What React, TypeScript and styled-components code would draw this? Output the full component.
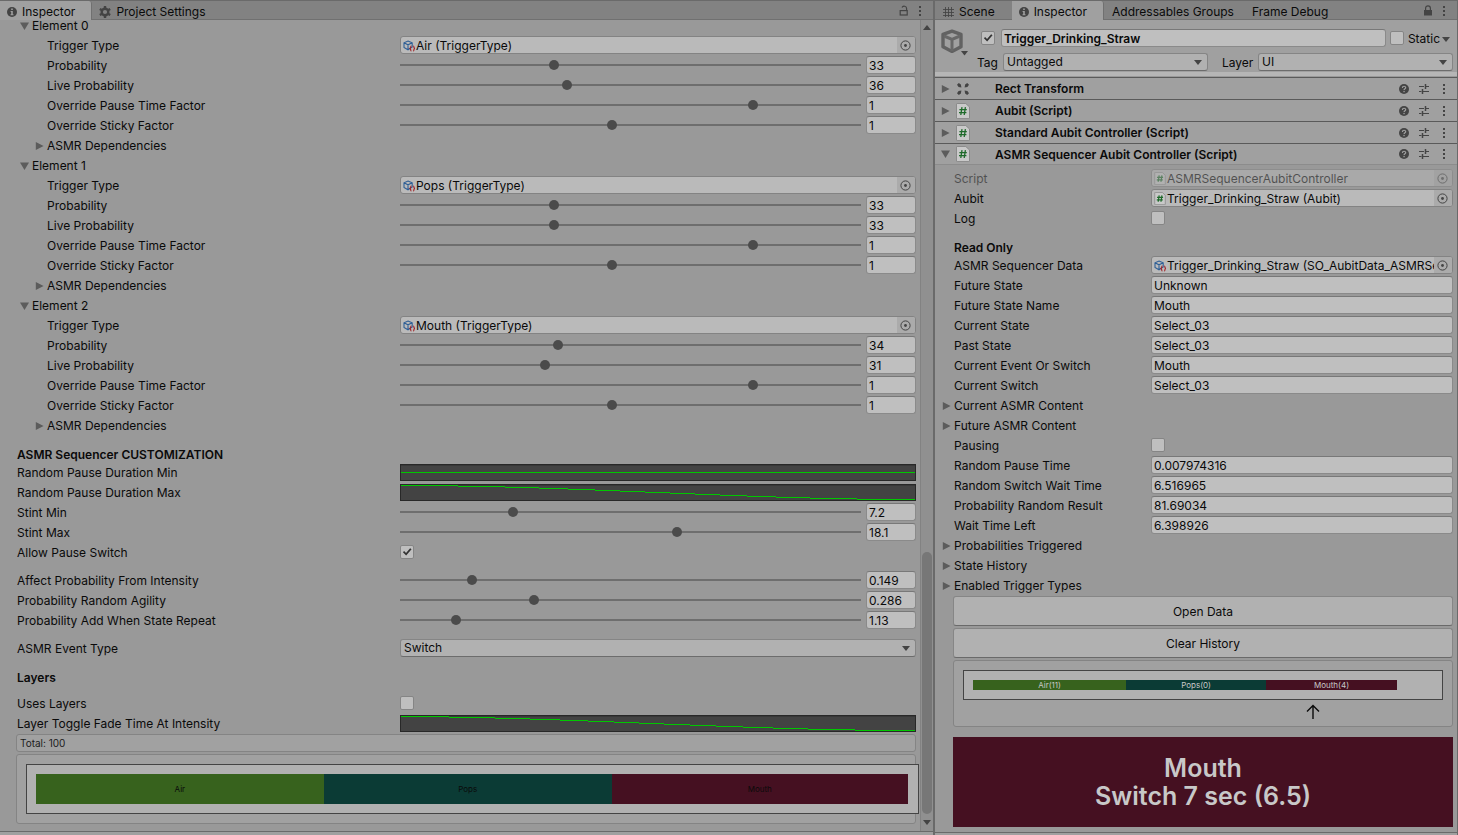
import React, { useId } from "react";
import styled, { createGlobalStyle, css } from "styled-components";

const c = {
  panel: "#999999",
  raised: "#a0a0a0",
  tabs: "#828282",
  line: "#6a6a6a",
  softLine: "#848484",
  field: "#bfbfbf",
  text: "#0a0a0a",
  icon: "#444444",
  arrow: "#5c5c5c",
  air: "#37621d",
  pops: "#0b3b35",
  mouth: "#451021",
};

const GlobalStyle = createGlobalStyle`
  *, *::before, *::after { box-sizing: border-box; }
  body { margin: 0; background: ${c.panel}; }
  body, button, input, select {
    font-family: Inter, "Liberation Sans", sans-serif;
    font-size: 12px;
    line-height: 16px;
    color: ${c.text};
  }
  svg { display: block; flex: none; }
`;

/* ---------- shell ---------- */

const Shell = styled.div`
  display: grid;
  grid-template-columns: minmax(0, 933fr) 2px minmax(0, 523fr);
  min-height: 100vh;
`;

const Divider = styled.div`
  background: ${c.line};
`;

const Panel = styled.section<{ $edge?: boolean }>`
  display: flex;
  flex-direction: column;
  min-width: 0;
  background: ${c.panel};
  border-right: ${(p) => (p.$edge ? `1px solid ${c.line}` : "0")};
`;

const TabBar = styled.nav`
  display: flex;
  height: 20px;
  background: ${c.tabs};
  border-top: 1px solid ${c.line};
  box-shadow: inset 0 -1px 0 #707070;
`;

const Tab = styled.button<{ $active?: boolean; $icon?: boolean }>`
  display: flex;
  align-items: center;
  gap: 5px;
  padding: 3px ${(p) => (p.$icon ? 16 : 9)}px 0 ${(p) => (p.$icon ? 7 : 8)}px;
  border: 0;
  border-right: 1px solid ${(p) => (p.$active ? "#707070" : "transparent")};
  border-radius: 0 3px 0 0;
  background: ${(p) => (p.$active ? c.raised : "transparent")};
  white-space: nowrap;
`;

const TabTools = styled.div`
  display: flex;
  gap: 4px;
  margin-left: auto;
  padding-right: 7px;
`;

const IconButton = styled.button`
  display: grid;
  place-items: center;
  width: 12px;
  padding: 0;
  border: 0;
  background: none;
  color: ${c.icon};
`;

const ScrollArea = styled.div`
  display: flex;
  flex: 1;
`;

const Content = styled.div`
  flex: 1;
  min-width: 0;
  padding: 0 4px 7px 0;
  clip-path: inset(0 -1px 0 0);
`;

const Sheet = styled.div`
  display: flex;
  flex-direction: column;
  gap: 2px;
  margin-top: -4px;
`;

const ScrollBar = styled.div`
  display: flex;
  flex-direction: column;
  width: 13px;
  padding: 5px 1px 6px;
  align-items: center;
  background: #909090;
  border-left: 1px solid #828282;
  color: ${c.icon};
`;

const ScrollGap = styled.div`
  flex: 518;
`;

const ScrollThumb = styled.div`
  flex: 262;
  width: 10px;
  margin: 4px 0 6px;
  border-radius: 5px;
  background: #777777;
`;

const Footer = styled.div<{ $height: number }>`
  height: ${(p) => p.$height}px;
  background: ${c.raised};
  border-top: 1px solid ${c.line};
`;

/* ---------- property rows ---------- */

const columns = {
  left: "minmax(0, 400fr) minmax(0, 516fr)",
  right: "minmax(0, 216fr) minmax(0, 302fr)",
};

const RowBox = styled.div<{ $side: Side; $dim?: boolean }>`
  display: grid;
  grid-template-columns: ${(p) => columns[p.$side]};
  height: 18px;
  opacity: ${(p) => (p.$dim ? 0.5 : 1)};
`;

const labelBase = css`
  padding-top: 2px;
  white-space: nowrap;
`;

const Label = styled.label<{ $indent: number }>`
  ${labelBase}
  padding-left: ${(p) => p.$indent}px;
`;

const Heading = styled.h2<{ $indent: number; $before: number; $after: number }>`
  margin: ${(p) => p.$before}px 0 ${(p) => p.$after}px;
  padding-left: ${(p) => p.$indent}px;
  font-size: 12px;
  line-height: 18px;
  font-weight: 600;
`;

const Gap = styled.div<{ $size: number }>`
  height: ${(p) => p.$size}px;
`;

const FoldButton = styled.button<{ $indent: number }>`
  ${labelBase}
  display: flex;
  align-items: center;
  gap: 2px;
  height: 18px;
  padding-left: ${(p) => p.$indent - 13}px;
  padding-right: 0;
  padding-bottom: 0;
  border: 0;
  background: none;
  text-align: left;
`;

const TextInput = styled.input<{ $bold?: boolean }>`
  width: 100%;
  min-width: 0;
  height: 18px;
  padding: 1px 2px 0;
  border: 1px solid #8a8a8a;
  border-top-color: #787878;
  border-radius: 3px;
  background: ${c.field};
  font-weight: ${(p) => (p.$bold ? 600 : 400)};
`;

const SliderBox = styled.div`
  display: grid;
  grid-template-columns: minmax(0, 1fr) 50px;
  gap: 5px;
`;

const Range = styled.input`
  appearance: none;
  width: 100%;
  height: 18px;
  margin: 0;
  background: none;
  &::-webkit-slider-runnable-track {
    height: 2px;
    background: #6e6e6e;
  }
  &::-webkit-slider-thumb {
    appearance: none;
    width: 10px;
    height: 10px;
    margin-top: -4px;
    border-radius: 50%;
    background: #4b4b4b;
  }
`;

const CheckBox = styled.input`
  appearance: none;
  flex: none;
  width: 14px;
  height: 14px;
  margin: 2px 0 0;
  border: 1px solid #858585;
  border-radius: 2px;
  background: ${c.field};
  &:checked::before {
    content: "";
    display: block;
    width: 12px;
    height: 12px;
    background: #333333;
    clip-path: polygon(16% 52%, 26% 42%, 42% 58%, 76% 18%, 88% 28%, 43% 80%);
  }
`;

const SelectBox = styled.div<{ $share: number }>`
  position: relative;
  flex: ${(p) => p.$share};
  min-width: 0;
  svg {
    position: absolute;
    top: 7px;
    right: 6px;
    pointer-events: none;
    color: ${c.icon};
  }
`;

const SelectInput = styled.select`
  appearance: none;
  width: 100%;
  height: 18px;
  padding: 0 18px 0 3px;
  border: 1px solid #858585;
  border-bottom-color: #6c6c6c;
  border-radius: 3px;
  background: #b1b1b1;
`;

const ObjectBox = styled.div`
  display: flex;
  height: 18px;
  border: 1px solid #838383;
  border-radius: 3px;
  background: #bababa;
  overflow: hidden;
`;

const ObjectName = styled.output`
  display: flex;
  align-items: center;
  flex: 1;
  min-width: 0;
  gap: 1px;
  padding: 1px 0 0 2px;
  overflow: hidden;
  white-space: nowrap;
`;

const Picker = styled.button`
  display: grid;
  place-items: center;
  width: 18px;
  padding: 0 1px 0 0;
  border: 0;
  background: #ababab;
  color: ${c.icon};
`;

const CurveBox = styled.button`
  height: 17px;
  margin-top: 1px;
  padding: 0;
  border: 1px solid #282828;
  background: #434343;
  box-shadow: inset 0 1px 0 #383838;
  svg {
    width: 100%;
    height: 15px;
  }
`;

/* ---------- boxes, charts and buttons ---------- */

const HelpBox = styled.div<{ $indent: number }>`
  margin-left: ${(p) => p.$indent}px;
  border: 1px solid ${c.softLine};
  border-radius: 3px;
  background: #a1a1a1;
`;

const TotalBox = styled(HelpBox)`
  height: 18px;
  padding-left: 3px;
  font-size: 10px;
  color: #1c1c1c;
`;

const WideChart = styled(HelpBox)`
  padding: 9px 0 9px 9px;
`;

const SmallChart = styled(HelpBox)`
  height: 67px;
  padding: 9px;
`;

const Frame = styled.div<{ $overhang?: boolean }>`
  display: flex;
  margin-right: ${(p) => (p.$overhang ? -4 : 0)}px;
  padding: 9px ${(p) => (p.$overhang ? 10 : 9)}px 9px 9px;
  border: 1px solid #444444;
  background: #b1b1b1;
`;

const Segment = styled.div<{ $share: number; $fill: string; $tall?: boolean }>`
  flex: 0 0 ${(p) => p.$share}%;
  height: ${(p) => (p.$tall ? 30 : 10)}px;
  background: ${(p) => p.$fill};
  color: ${(p) => (p.$tall ? "#0a0a0a" : "#c8c8c8")};
  font-size: 8px;
  line-height: ${(p) => (p.$tall ? 30 : 10)}px;
  text-align: center;
`;

const Marker = styled.div`
  display: flex;
  justify-content: center;
  padding: 4px 0 0 46%;
`;

const WideButton = styled.button`
  height: 30px;
  margin-left: 18px;
  padding: 1px 0 0;
  border: 1px solid #868686;
  border-bottom-color: #6a6a6a;
  border-radius: 3px;
  background: #b1b1b1;
`;

const Banner = styled.div`
  display: flex;
  flex-direction: column;
  justify-content: center;
  height: 90px;
  margin: 8px 0 0 18px;
  background: ${c.mouth};
  color: #c8c8c8;
  font-size: 25px;
  line-height: 28px;
  font-weight: 600;
  text-align: center;
`;

/* ---------- object header and component bars ---------- */

const ObjectHeader = styled.header`
  display: flex;
  gap: 5px;
  height: 58px;
  padding: 9px 4px 0 5px;
  background: ${c.raised};
  border-bottom: 1px solid #5a5a5a;
  box-shadow: inset 0 -1px 0 #999999, inset 0 -5px 0 #b6b6b6;
`;

const HeaderLines = styled.div`
  display: flex;
  flex: 1;
  flex-direction: column;
  gap: 6px;
  min-width: 0;
`;

const HeaderLine = styled.div`
  display: flex;
  gap: 6px;
`;

const NameLine = styled(HeaderLine)`
  gap: 4px;
  padding-left: 7px;
`;

const NameField = styled.div`
  flex: 1;
  padding-left: 2px;
`;

const StaticLabel = styled.label`
  ${labelBase}
  display: flex;
  gap: 2px;
  padding-right: 3px;
  color: ${c.text};
  svg {
    margin-top: 6px;
    color: ${c.icon};
  }
`;

const InlineLabel = styled.label<{ $before: number; $width: number }>`
  ${labelBase}
  width: ${(p) => p.$width}px;
  margin-left: ${(p) => p.$before}px;
  margin-right: -6px;
`;

const ComponentBar = styled.div<{ $open?: boolean }>`
  display: flex;
  align-items: center;
  height: ${(p) => (p.$open ? 21 : 22)}px;
  padding: 0 7px 0 5px;
  background: ${c.raised};
  border-bottom: 1px solid ${(p) => (p.$open ? "#8c8c8c" : "#5a5a5a")};
`;

const ComponentTitle = styled.h3`
  flex: 1;
  margin: 0 0 0 24px;
  padding-top: 1px;
  font-size: 12px;
  line-height: 16px;
  font-weight: 600;
`;

const ComponentFold = styled.button`
  display: flex;
  align-items: center;
  gap: 5px;
  width: 31px;
  padding: 0;
  border: 0;
  background: none;
`;

const ComponentTools = styled.div`
  display: flex;
  gap: 8px;
`;

const Body = styled.div`
  display: flex;
  flex-direction: column;
  flex: 1;
  gap: 2px;
  padding: 4px 4px 5px 0;
`;

/* ---------- icons ---------- */

const Arrow = ({ open }: { open?: boolean }) => (
  <svg width="11" height="10" viewBox="0 0 11 10" fill={c.arrow}>
    <path d={open ? "M1 1.5H10L5.5 9Z" : "M1.8 1V9L9.6 5Z"} />
  </svg>
);
const Caret = () => (
  <svg width="8" height="5" viewBox="0 0 8 5" fill="currentColor">
    <path d="M0 0H8L4 5Z" />
  </svg>
);
const ScrollCaret = ({ up }: { up?: boolean }) => (
  <svg width="8" height="5" viewBox="0 0 8 5" fill="currentColor">
    <path d={up ? "M4 0L8 5H0Z" : "M0 0H8L4 5Z"} />
  </svg>
);
const InfoIcon = () => (
  <svg width="10" height="10" viewBox="0 0 10 10">
    <circle cx="5" cy="5" r="5" fill={c.icon} />
    <path d="M4.2 1.6h1.6v1.5H4.2zM3.6 4h2.2v3.3h.7v1H3.5v-1h.7V5h-.6z" fill={c.raised} />
  </svg>
);
const GearIcon = () => (
  <svg width="12" height="12" viewBox="0 0 12 12" fill="none" stroke={c.icon}>
    <circle cx="6" cy="6" r="3.3" strokeWidth="2.4" />
    <path d="M6 0v2M6 10v2M.8 3l1.8 1M9.4 8l1.8 1M.8 9l1.8-1M9.4 4l1.8-1" strokeWidth="2.4" />
  </svg>
);
const GridIcon = () => (
  <svg width="12" height="12" viewBox="0 0 12 12" stroke={c.icon} fill="none">
    <path d="M3.5 1v10M6.5 1v10M9.5 1v10M1 3.5h11M1 6.5h11M1 9.5h11" strokeWidth="1" opacity=".85" />
  </svg>
);
const LockIcon = ({ locked }: { locked?: boolean }) => (
  <svg width="10" height="12" viewBox="0 0 10 12" fill="none" stroke="currentColor" strokeWidth="1.2">
    {locked ? (
      <>
        <rect x="1" y="5" width="8" height="5.5" fill="currentColor" stroke="none" />
        <path d="M2.6 5V3.2a2.4 2.4 0 0 1 4.8 0V5" />
      </>
    ) : (
      <>
        <rect x="1.2" y="5.6" width="7" height="4.4" />
        <path d="M3 2.6a2.4 2.4 0 0 1 4.6 1V5.6" />
      </>
    )}
  </svg>
);
const KebabIcon = () => (
  <svg width="4" height="12" viewBox="0 0 4 12" fill="currentColor">
    <path d="M1 1h2v2H1zM1 5h2v2H1zM1 9h2v2H1z" />
  </svg>
);
const HelpIcon = () => (
  <svg width="10" height="10" viewBox="0 0 10 10">
    <circle cx="5" cy="5" r="5" fill={c.icon} />
    <path d="M3.4 3.9c0-2.3 3.3-2.1 3.3-.2 0 1.1-1.6 1.2-1.6 2.4" fill="none" stroke={c.raised} strokeWidth="1.2" />
    <rect x="4.4" y="6.9" width="1.3" height="1.3" fill={c.raised} />
  </svg>
);
const PresetIcon = () => (
  <svg width="12" height="12" viewBox="0 0 12 12" stroke="currentColor" fill="none">
    <path d="M1 3.5h5M7.5 3.5h3.5M1 8.5h2.5M5 8.5h6" strokeWidth="1.1" />
    <path d="M7.5 1v5M4.5 6v5" strokeWidth="1.5" />
  </svg>
);
const TargetIcon = () => (
  <svg width="11" height="11" viewBox="0 0 11 11">
    <circle cx="5.5" cy="5.5" r="4.6" fill="none" stroke="currentColor" />
    <circle cx="5.5" cy="5.5" r="1.4" fill="currentColor" />
  </svg>
);
const RectTransformIcon = () => (
  <svg width="14" height="14" viewBox="0 0 14 14" fill={c.icon}>
    <path d="M1 2.8L2.8 1L4.9 2.6L5.4 5.4L2.6 4.9ZM13 2.8L11.2 1L9.1 2.6L8.6 5.4L11.4 4.9ZM1 11.2L2.8 13L4.9 11.4L5.4 8.6L2.6 9.1ZM13 11.2L11.2 13L9.1 11.4L8.6 8.6L11.4 9.1Z" />
  </svg>
);
const ScriptIcon = ({ small }: { small?: boolean }) => (
  <svg width={small ? 12 : 14} height={small ? 13 : 16} viewBox="0 0 14 16">
    <path d="M2 .5H9.8L13.5 4V15a.6.6 0 0 1-.6.6H1.1A.6.6 0 0 1 .5 15V1.1A.6.6 0 0 1 1.1.5Z" fill="#c9c9c9" stroke="#8b8b8b" />
    <path d="M6 4.2L4.8 12M9.4 4.2L8.2 12M3.4 6.6h7.4M3 9.6h7.4" stroke="#1e6a2a" strokeWidth={small ? 1.5 : 1.3} fill="none" />
  </svg>
);
const AssetIcon = () => (
  <svg width="12" height="12" viewBox="0 0 12 12" fill="none">
    <path d="M5 1L9.2 2.8V7L5 9.8L1 7.4V2.8ZM1 2.8L5 4.8L9.2 2.8M5 4.8V9.8" stroke="#2f5f96" strokeWidth="1.1" />
    <path d="M8.4 6.2c-1 0-.4 1.6-1.4 2.2 1 .6.4 2.4 1.4 2.4M10.2 6.2c1 0 .4 1.6 1.4 2.2-1 .6-.4 2.4-1.4 2.4" stroke="#a3262b" strokeWidth="1.2" />
  </svg>
);
const CubeIcon = () => (
  <svg width="29" height="28" viewBox="0 0 29 28" fill="none">
    <path d="M12 2.2L21 5.4V17.8L12 22.4L3 17.8V5.4Z" stroke="#626262" strokeWidth="3.4" strokeLinejoin="round" />
    <path d="M4 7L12 10.4L20 7M12 10.4V22" stroke="#686868" strokeWidth="3" />
    <path d="M21 22H28L24.5 26.5Z" fill={c.icon} />
  </svg>
);
const UpArrow = () => (
  <svg width="14" height="16" viewBox="0 0 14 16" fill="none" stroke={c.text} strokeWidth="1.4">
    <path d="M7 15V1.8M1 7.6L7 1.6L13 7.6" />
  </svg>
);

/* ---------- composed rows ---------- */

type Side = "left" | "right";

const labelX = { left: 17, right: 19 };

function Fold({ label, indent, open }: { label: string; indent: number; open?: boolean }) {
  return (
    <FoldButton type="button" $indent={indent} aria-expanded={!!open}>
      <Arrow open={open} />
      {label}
    </FoldButton>
  );
}

type RowProps = {
  side: Side;
  label: string;
  indent?: number;
  dim?: boolean;
  children: (id: string) => React.ReactNode;
};

function Row({ side, label, indent, dim, children }: RowProps) {
  const id = useId();
  return (
    <RowBox $side={side} $dim={dim}>
      <Label htmlFor={id} $indent={indent ?? labelX[side]}>
        {label}
      </Label>
      {children(id)}
    </RowBox>
  );
}

type SliderProps = { label: string; value: string; max: number; indent?: number };

function SliderRow({ label, value, max, indent }: SliderProps) {
  return (
    <Row side="left" label={label} indent={indent}>
      {(id) => (
        <SliderBox>
          <Range id={id} type="range" min={0} max={max} step="any" defaultValue={value} />
          <TextInput aria-label={`${label} value`} defaultValue={value} />
        </SliderBox>
      )}
    </Row>
  );
}

type ObjectProps = { side: Side; label: string; name: string; script?: boolean; indent?: number; dim?: boolean };

function ObjectRow({ side, label, name, script, indent, dim }: ObjectProps) {
  return (
    <Row side={side} label={label} indent={indent} dim={dim}>
      {(id) => (
        <ObjectBox>
          <ObjectName id={id}>
            {script ? <ScriptIcon small /> : <AssetIcon />}
            {name}
          </ObjectName>
          <Picker type="button" aria-label={`Pick ${label}`} disabled={dim}>
            <TargetIcon />
          </Picker>
        </ObjectBox>
      )}
    </Row>
  );
}

function TextRow({ label, value }: { label: string; value: string }) {
  return (
    <Row side="right" label={label}>
      {(id) => <TextInput id={id} defaultValue={value} />}
    </Row>
  );
}

function CheckRow({ side, label, checked }: { side: Side; label: string; checked?: boolean }) {
  return (
    <Row side={side} label={label}>
      {(id) => <CheckBox id={id} type="checkbox" defaultChecked={checked} />}
    </Row>
  );
}

// Each stop is the x at which the curve drops one pixel.
function CurveRow({ label, stops, top }: { label: string; stops: number[]; top: number }) {
  const path = stops.map((x, i) => `M${i ? stops[i - 1] : 0} ${top + i + 0.5}H${x}`).join("");
  return (
    <Row side="left" label={label}>
      {(id) => (
        <CurveBox id={id} type="button">
          <svg viewBox="0 0 514 15" preserveAspectRatio="none" fill="none" stroke="#00c800" shapeRendering="crispEdges">
            <path d={path} />
          </svg>
        </CurveBox>
      )}
    </Row>
  );
}

function Dropdown({ id, value, share = 1 }: { id: string; value: string; share?: number }) {
  return (
    <SelectBox $share={share}>
      <SelectInput id={id} defaultValue={value}>
        <option>{value}</option>
      </SelectInput>
      <Caret />
    </SelectBox>
  );
}

/* ---------- data ---------- */

const elements = [
  { name: "Air", probability: "33", live: "36" },
  { name: "Pops", probability: "33", live: "33" },
  { name: "Mouth", probability: "34", live: "31" },
];

const pauseMaxStops = [57, 104, 138, 167, 194, 219, 244, 269, 294, 319, 346, 375, 409, 456, 514];
const fadeStops = [48, 94, 129, 159, 187, 213, 238, 263, 289, 315, 342, 372, 407, 454, 514];

const components = ["Rect Transform", "Aubit (Script)", "Standard Aubit Controller (Script)", "ASMR Sequencer Aubit Controller (Script)"];

const stateFields = [
  ["Future State", "Unknown"],
  ["Future State Name", "Mouth"],
  ["Current State", "Select_03"],
  ["Past State", "Select_03"],
  ["Current Event Or Switch", "Mouth"],
  ["Current Switch", "Select_03"],
];

const timeFields = [
  ["Random Pause Time", "0.007974316"],
  ["Random Switch Wait Time", "6.516965"],
  ["Probability Random Result", "81.69034"],
  ["Wait Time Left", "6.398926"],
];

function PanelTools({ locked }: { locked?: boolean }) {
  return (
    <TabTools>
      <IconButton type="button" aria-label="Lock">
        <LockIcon locked={locked} />
      </IconButton>
      <IconButton type="button" aria-label="Menu">
        <KebabIcon />
      </IconButton>
    </TabTools>
  );
}

function SettingsPanel() {
  return (
    <Panel>
      <TabBar>
        <Tab type="button" $active $icon>
          <InfoIcon />
          Inspector
        </Tab>
        <Tab type="button" $icon>
          <GearIcon />
          Project Settings
        </Tab>
        <PanelTools />
      </TabBar>
      <ScrollArea>
        <Content>
          <Sheet>
            {elements.map((e, i) => (
              <React.Fragment key={e.name}>
                <Fold label={`Element ${i}`} indent={32} open />
                <ObjectRow side="left" label="Trigger Type" name={`${e.name} (TriggerType)`} indent={47} />
                <SliderRow label="Probability" value={e.probability} max={100} indent={47} />
                <SliderRow label="Live Probability" value={e.live} max={100} indent={47} />
                <SliderRow label="Override Pause Time Factor" value="1" max={1.296} indent={47} />
                <SliderRow label="Override Sticky Factor" value="1" max={2.18} indent={47} />
                <Fold label="ASMR Dependencies" indent={47} />
              </React.Fragment>
            ))}
            <Heading $indent={17} $before={10} $after={-3}>
              ASMR Sequencer CUSTOMIZATION
            </Heading>
            <CurveRow label="Random Pause Duration Min" stops={[514]} top={7} />
            <CurveRow label="Random Pause Duration Max" stops={pauseMaxStops} top={0} />
            <SliderRow label="Stint Min" value="7.2" max={30} />
            <SliderRow label="Stint Max" value="18.1" max={30} />
            <CheckRow side="left" label="Allow Pause Switch" checked />
            <Gap $size={6} />
            <SliderRow label="Affect Probability From Intensity" value="0.149" max={1} />
            <SliderRow label="Probability Random Agility" value="0.286" max={1} />
            <SliderRow label="Probability Add When State Repeat" value="1.13" max={10} />
            <Gap $size={6} />
            <Row side="left" label="ASMR Event Type">
              {(id) => <Dropdown id={id} value="Switch" />}
            </Row>
            <Heading $indent={17} $before={10} $after={5}>
              Layers
            </Heading>
            <CheckRow side="left" label="Uses Layers" />
            <CurveRow label="Layer Toggle Fade Time At Intensity" stops={fadeStops} top={0} />
            <TotalBox $indent={16}>Total: 100</TotalBox>
            <WideChart $indent={16}>
              <Frame $overhang>
                <Segment $share={33} $fill={c.air} $tall>
                  Air
                </Segment>
                <Segment $share={33} $fill={c.pops} $tall>
                  Pops
                </Segment>
                <Segment $share={34} $fill={c.mouth} $tall>
                  Mouth
                </Segment>
              </Frame>
            </WideChart>
          </Sheet>
        </Content>
        <ScrollBar>
          <ScrollCaret up />
          <ScrollGap />
          <ScrollThumb />
          <ScrollCaret />
        </ScrollBar>
      </ScrollArea>
      <Footer $height={4} />
    </Panel>
  );
}

function ObjectPanel() {
  const id = useId();
  return (
    <Panel $edge>
      <TabBar>
        <Tab type="button" $icon>
          <GridIcon />
          Scene
        </Tab>
        <Tab type="button" $active $icon>
          <InfoIcon />
          Inspector
        </Tab>
        <Tab type="button">Addressables Groups</Tab>
        <Tab type="button">Frame Debug</Tab>
        <PanelTools locked />
      </TabBar>
      <ObjectHeader>
        <CubeIcon />
        <HeaderLines>
          <NameLine>
            <CheckBox type="checkbox" aria-label="Active" defaultChecked />
            <NameField>
              <TextInput $bold aria-label="Name" defaultValue="Trigger_Drinking_Straw" />
            </NameField>
            <CheckBox type="checkbox" id={`${id}s`} />
            <StaticLabel htmlFor={`${id}s`}>
              Static
              <Caret />
            </StaticLabel>
          </NameLine>
          <HeaderLine>
            <InlineLabel htmlFor={`${id}t`} $before={3} $width={26}>
              Tag
            </InlineLabel>
            <Dropdown id={`${id}t`} value="Untagged" share={205} />
            <InlineLabel htmlFor={`${id}l`} $before={8} $width={36}>
              Layer
            </InlineLabel>
            <Dropdown id={`${id}l`} value="UI" share={195} />
          </HeaderLine>
        </HeaderLines>
      </ObjectHeader>
      {components.map((name, i) => {
        const open = i === components.length - 1;
        return (
          <ComponentBar key={name} $open={open}>
            <ComponentFold type="button" aria-label={`Toggle ${name}`} aria-expanded={open}>
              <Arrow open={open} />
              {i === 0 ? <RectTransformIcon /> : <ScriptIcon />}
            </ComponentFold>
            <ComponentTitle>{name}</ComponentTitle>
            <ComponentTools>
              <IconButton type="button" aria-label="Help">
                <HelpIcon />
              </IconButton>
              <IconButton type="button" aria-label="Presets">
                <PresetIcon />
              </IconButton>
              <IconButton type="button" aria-label="Menu">
                <KebabIcon />
              </IconButton>
            </ComponentTools>
          </ComponentBar>
        );
      })}
      <Body>
        <ObjectRow side="right" label="Script" name="ASMRSequencerAubitController" script dim />
        <ObjectRow side="right" label="Aubit" name="Trigger_Drinking_Straw (Aubit)" script />
        <CheckRow side="right" label="Log" />
        <Heading $indent={19} $before={10} $after={-3}>
          Read Only
        </Heading>
        <ObjectRow side="right" label="ASMR Sequencer Data" name="Trigger_Drinking_Straw (SO_AubitData_ASMRSe" />
        {stateFields.map(([label, value]) => (
          <TextRow key={label} label={label} value={value} />
        ))}
        <Fold label="Current ASMR Content" indent={19} />
        <Fold label="Future ASMR Content" indent={19} />
        <CheckRow side="right" label="Pausing" />
        {timeFields.map(([label, value]) => (
          <TextRow key={label} label={label} value={value} />
        ))}
        <Fold label="Probabilities Triggered" indent={19} />
        <Fold label="State History" indent={19} />
        <Fold label="Enabled Trigger Types" indent={19} />
        <WideButton type="button">Open Data</WideButton>
        <WideButton type="button">Clear History</WideButton>
        <SmallChart $indent={18}>
          <Frame>
            <Segment $share={33.3} $fill={c.air}>
              Air(11)
            </Segment>
            <Segment $share={30.4} $fill={c.pops}>
              Pops(0)
            </Segment>
            <Segment $share={28.5} $fill={c.mouth}>
              Mouth(4)
            </Segment>
          </Frame>
          <Marker>
            <UpArrow />
          </Marker>
        </SmallChart>
        <Banner>
          <span>Mouth</span>
          <span>Switch 7 sec (6.5)</span>
        </Banner>
      </Body>
      <Footer $height={3} />
    </Panel>
  );
}

export default function App() {
  return (
    <>
      <GlobalStyle />
      <Shell>
        <SettingsPanel />
        <Divider />
        <ObjectPanel />
      </Shell>
    </>
  );
}
